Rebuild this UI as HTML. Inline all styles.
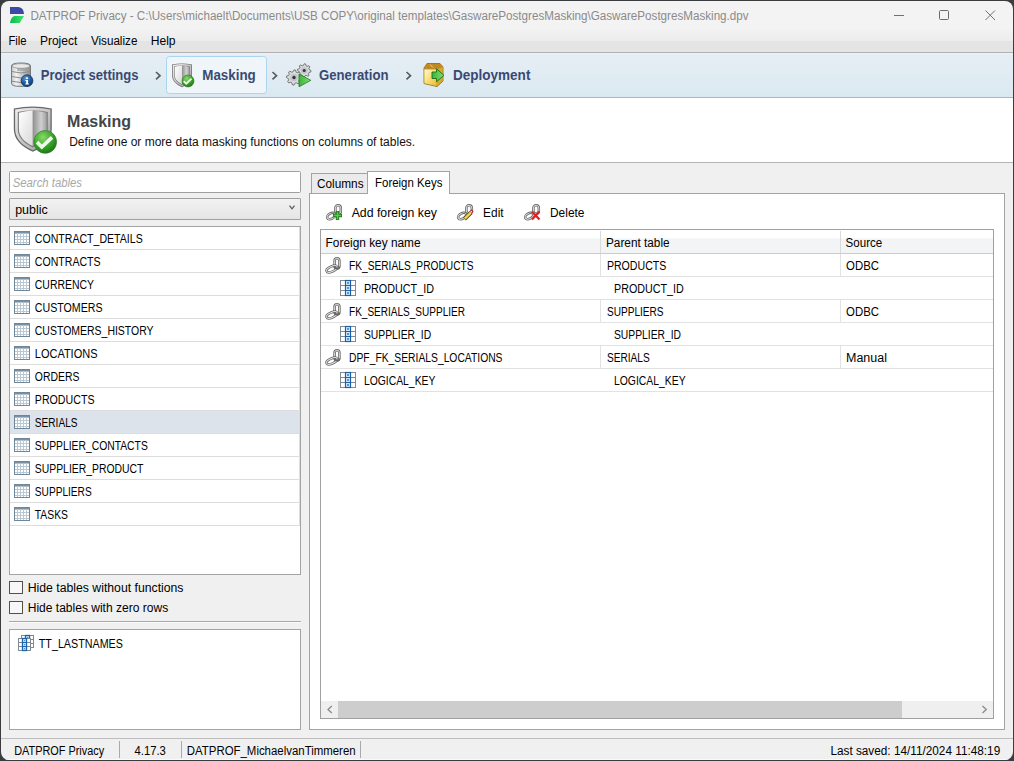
<!DOCTYPE html>
<html><head><meta charset="utf-8"><title>DATPROF Privacy - Masking</title>
<style>html,body{margin:0;padding:0;background:#3a3c40;width:1014px;height:761px;overflow:hidden}svg{display:block}</style></head>
<body><svg width="1014" height="761" viewBox="0 0 1014 761">
<defs>
<clipPath id="win"><rect x="1" y="1" width="1012" height="759" rx="8"/></clipPath>
<linearGradient id="gWiz" x1="0" y1="0" x2="0" y2="1"><stop offset="0" stop-color="#e7eef5"/><stop offset="1" stop-color="#dae9f1"/></linearGradient>
<linearGradient id="gMenu" x1="0" y1="0" x2="0" y2="1"><stop offset="0" stop-color="#f2f2f2"/><stop offset="1" stop-color="#ececec"/></linearGradient>
<linearGradient id="gCombo" x1="0" y1="0" x2="0" y2="1"><stop offset="0" stop-color="#f2f2f2"/><stop offset="1" stop-color="#e5e5e5"/></linearGradient>
<linearGradient id="gTab" x1="0" y1="0" x2="0" y2="1"><stop offset="0" stop-color="#f3f3f3"/><stop offset="1" stop-color="#e6e6e6"/></linearGradient>
<linearGradient id="gHdr" x1="0" y1="0" x2="0" y2="1"><stop offset="0" stop-color="#ffffff"/><stop offset="0.45" stop-color="#f7f7f8"/><stop offset="0.5" stop-color="#eef0f2"/><stop offset="1" stop-color="#f3f4f5"/></linearGradient>
<linearGradient id="gSilver" x1="0" y1="0" x2="1" y2="0"><stop offset="0" stop-color="#c8c8c8"/><stop offset="0.25" stop-color="#f4f4f4"/><stop offset="0.6" stop-color="#c4c4c4"/><stop offset="1" stop-color="#8c8c8c"/></linearGradient>
<linearGradient id="gRim" x1="0" y1="0" x2="1" y2="1"><stop offset="0" stop-color="#f0f0f0"/><stop offset="0.5" stop-color="#c8c8c8"/><stop offset="1" stop-color="#9a9a9a"/></linearGradient>
<linearGradient id="gShieldL" x1="0" y1="0" x2="1" y2="1"><stop offset="0" stop-color="#ffffff"/><stop offset="1" stop-color="#d8d8d8"/></linearGradient>
<linearGradient id="gShieldR" x1="0" y1="0" x2="1" y2="0"><stop offset="0" stop-color="#909090"/><stop offset="0.6" stop-color="#d0d0d0"/><stop offset="1" stop-color="#a0a0a0"/></linearGradient>
<radialGradient id="gGreen" cx="0.4" cy="0.3" r="0.7"><stop offset="0" stop-color="#8ad86a"/><stop offset="0.6" stop-color="#3aa52a"/><stop offset="1" stop-color="#1f7a18"/></radialGradient>
<radialGradient id="gBlue" cx="0.4" cy="0.3" r="0.7"><stop offset="0" stop-color="#5a9ad8"/><stop offset="0.6" stop-color="#1f5c9c"/><stop offset="1" stop-color="#0f3a6e"/></radialGradient>
<linearGradient id="gGold" x1="0" y1="0" x2="1" y2="1"><stop offset="0" stop-color="#fffbe0"/><stop offset="0.45" stop-color="#f8e07a"/><stop offset="1" stop-color="#e8b838"/></linearGradient>
<linearGradient id="gGreenA" x1="0" y1="0" x2="1" y2="0"><stop offset="0" stop-color="#3cb43c"/><stop offset="1" stop-color="#7ee070"/></linearGradient>
<linearGradient id="gLogoG" x1="0" y1="0" x2="1" y2="0"><stop offset="0" stop-color="#10b848"/><stop offset="1" stop-color="#3ae870"/></linearGradient>
<g id="tbl">
  <rect x="0.5" y="0.5" width="15" height="13" fill="#ffffff" stroke="#6f8799"/>
  <rect x="1" y="1" width="14" height="1.6" fill="#7b90a0"/>
  <path d="M1 5.5H15M1 8.5H15M1 11.5H15M3.5 2V13M6.5 2V13M9.5 2V13M12.5 2V13" stroke="#b8c8d4" stroke-width="1" fill="none"/>
</g>
<g id="col">
  <rect x="0.5" y="0.5" width="15" height="15" fill="#ffffff" stroke="#7f8a95"/>
  <path d="M1 5.5H15M1 10.5H15" stroke="#7f8a95"/>
  <rect x="5.5" y="0.5" width="5" height="15" fill="#d8eafc" stroke="#1f5f9f" stroke-width="1.2"/>
  <path d="M5.5 5.5H10.5M5.5 10.5H10.5" stroke="#1f5f9f" stroke-width="1.2"/>
  <rect x="7" y="2" width="2" height="2" fill="#4d97ea"/><rect x="7" y="7" width="2" height="2" fill="#4d97ea"/><rect x="7" y="12" width="2" height="2" fill="#4d97ea"/>
</g>
<g id="chain">
  <rect x="9.6" y="1.2" width="4.8" height="10.2" rx="2.4" fill="none" stroke="#666" stroke-width="2.5"/>
  <rect x="9.6" y="1.2" width="4.8" height="10.2" rx="2.4" fill="none" stroke="#e4e4e4" stroke-width="0.9"/>
  <ellipse cx="6.8" cy="12" rx="5.7" ry="2.5" transform="rotate(-24 6.8 12)" fill="none" stroke="#666" stroke-width="2.5"/>
  <ellipse cx="6.8" cy="12" rx="5.7" ry="2.5" transform="rotate(-24 6.8 12)" fill="none" stroke="#e4e4e4" stroke-width="0.9"/>
  <path d="M9.4 9.5 Q10 11.5 12 11.6 Q14.2 11.5 14.6 9.5" fill="none" stroke="#666" stroke-width="1.6"/>
</g>
<g id="chain2">
  <rect x="9.4" y="1.3" width="5.4" height="8.4" rx="2.7" fill="none" stroke="#666" stroke-width="2.5"/>
  <rect x="9.4" y="1.3" width="5.4" height="8.4" rx="2.7" fill="none" stroke="#e6e6e6" stroke-width="0.9"/>
  <ellipse cx="5.2" cy="12" rx="4.4" ry="2.7" transform="rotate(-28 5.2 12)" fill="none" stroke="#666" stroke-width="2.5"/>
  <ellipse cx="5.2" cy="12" rx="4.4" ry="2.7" transform="rotate(-28 5.2 12)" fill="none" stroke="#e6e6e6" stroke-width="0.9"/>
</g>
<g id="col13">
  <rect x="0.5" y="0.5" width="12" height="12" fill="#ffffff" stroke="#7f8a95"/>
  <path d="M1 4.5H12M1 8.5H12" stroke="#7f8a95"/>
  <rect x="4.5" y="0.5" width="4" height="12" fill="#d8eafc" stroke="#1f64a8" stroke-width="1.3"/>
  <path d="M4.5 4.5H8.5M4.5 8.5H8.5" stroke="#1f64a8" stroke-width="1.2"/>
  <rect x="6" y="2" width="1.2" height="1.2" fill="#4d97ea"/><rect x="6" y="6" width="1.2" height="1.2" fill="#4d97ea"/><rect x="6" y="10" width="1.2" height="1.2" fill="#4d97ea"/>
</g>
</defs>
<rect x="0" y="0" width="1014" height="761" fill="#3a3c40"/>
<g clip-path="url(#win)">
<rect x="0" y="0" width="1014" height="30" fill="#f3f3f3"/>
<rect x="0" y="30" width="1014" height="11" fill="url(#gMenu)"/>
<rect x="0" y="41" width="1014" height="11" fill="#e4e4e4"/>
<rect x="0" y="52" width="1014" height="1" fill="#b2b2b2"/>
<rect x="0" y="53" width="1014" height="44" fill="url(#gWiz)"/>
<rect x="0" y="53" width="1014" height="1" fill="#ebf3f9"/>
<rect x="0" y="97" width="1014" height="1" fill="#b4b4b4"/>
<rect x="0" y="98" width="1014" height="64" fill="#ffffff"/>
<rect x="0" y="162" width="1014" height="1" fill="#b4b4b4"/>
<rect x="0" y="163" width="1014" height="575" fill="#f0f0f0"/>
<rect x="0" y="738" width="1014" height="1" fill="#bdbdbd"/>
<rect x="0" y="739" width="1014" height="22" fill="#f0f0f0"/>
<rect x="0" y="759" width="1014" height="1" fill="#fafafa"/>
</g>
<rect x="894" y="15" width="10" height="1" fill="#707070"/>
<rect x="939.5" y="10.5" width="9" height="9" rx="1" fill="none" stroke="#6a6a6a"/>
<path d="M985.5 10.5L995 20M995 10.5L985.5 20" stroke="#707070" stroke-width="1"/>
<path d="M10 7H18.5Q23.6 7.5 24 14H10Z" fill="#3f48a2"/>
<path d="M14.6 16H24L19.6 23H10Q10.8 17 14.6 16Z" fill="url(#gLogoG)"/>
<rect x="166.5" y="56.5" width="100" height="37" rx="3" fill="#eff5f9" stroke="#a9d6ee"/>
<path d="M156.0 72L160.0 75.7L156.0 79.4" fill="none" stroke="#555c66" stroke-width="1.7"/>
<path d="M272.5 72L276.5 75.7L272.5 79.4" fill="none" stroke="#555c66" stroke-width="1.7"/>
<path d="M406.5 72L410.5 75.7L406.5 79.4" fill="none" stroke="#555c66" stroke-width="1.7"/>
<g>
<path d="M11.5 66 Q11.5 63 21 63 Q30.5 63 30.5 66 V83.5 Q30.5 86.4 21 86.4 Q11.5 86.4 11.5 83.5 Z" fill="url(#gSilver)" stroke="#7a7a7a" stroke-width="1"/>
<ellipse cx="21" cy="66" rx="9" ry="2.4" fill="#e8e8e8" stroke="#8a8a8a" stroke-width="0.8"/>
<path d="M11.8 71.5 Q21 74.5 30.2 71.5M11.8 76.5 Q21 79.5 30.2 76.5M11.8 81.2 Q21 84 30.2 81.2" fill="none" stroke="#8c8c8c" stroke-width="1"/>
<rect x="17" y="68" width="11" height="3" fill="#9a9a9a" opacity="0.6"/>
<circle cx="27" cy="80.7" r="5.9" fill="url(#gBlue)" stroke="#0e3566" stroke-width="0.8"/>
<rect x="26" y="77.4" width="2" height="1.6" fill="#fff"/>
<path d="M25.3 80H28V83.6H29V84.6H25.2V83.6H26.2V81H25.3Z" fill="#fff"/>
</g>
<g transform="translate(172 63.2) scale(1.0)">
<path d="M0 1.2 Q10 -0.8 20 1.2 V12 Q20 19.5 10 24 Q0 19.5 0 12 Z" fill="#6a6a6a"/>
<path d="M0.7 1.7 Q10 -0.1 19.3 1.7 V12 Q19.3 19 10 23.2 Q0.7 19 0.7 12 Z" fill="url(#gRim)"/>
<path d="M2.1 3 Q10 1.5 17.9 3 V12 Q17.9 18 10 21.7 Q2.1 18 2.1 12 Z" fill="#7c7c7c"/>
<path d="M2.7 3.5 Q6.4 2.4 10 2.2 V21 Q2.7 17.6 2.7 12 Z" fill="url(#gShieldL)"/>
<path d="M10 2.2 Q13.6 2.4 17.3 3.5 V12 Q17.3 17.6 10 21 Z" fill="url(#gShieldR)"/>
</g>
<circle cx="188" cy="81" r="6" fill="url(#gGreen)" stroke="#2a7a20" stroke-width="0.6"/>
<path d="M183.68 81.12 L186.20 83.70 L191.60 78.60" fill="none" stroke="#f4fff0" stroke-width="1.92" opacity="0.95"/>

<g transform="translate(13.8 106.2) scale(1.9)">
<path d="M0 1.2 Q10 -0.8 20 1.2 V12 Q20 19.5 10 24 Q0 19.5 0 12 Z" fill="#6a6a6a"/>
<path d="M0.7 1.7 Q10 -0.1 19.3 1.7 V12 Q19.3 19 10 23.2 Q0.7 19 0.7 12 Z" fill="url(#gRim)"/>
<path d="M2.1 3 Q10 1.5 17.9 3 V12 Q17.9 18 10 21.7 Q2.1 18 2.1 12 Z" fill="#7c7c7c"/>
<path d="M2.7 3.5 Q6.4 2.4 10 2.2 V21 Q2.7 17.6 2.7 12 Z" fill="url(#gShieldL)"/>
<path d="M10 2.2 Q13.6 2.4 17.3 3.5 V12 Q17.3 17.6 10 21 Z" fill="url(#gShieldR)"/>
</g>
<circle cx="45.2" cy="141.9" r="11.4" fill="url(#gGreen)" stroke="#2a7a20" stroke-width="0.6"/>
<path d="M36.99 142.13 L41.78 147.03 L52.04 137.34" fill="none" stroke="#f4fff0" stroke-width="3.65" opacity="0.95"/>

<path d="M311.00 70.60L310.87 71.93L308.91 72.55L308.44 73.43L309.01 75.41L307.98 76.25L306.15 75.31L305.19 75.60L304.20 77.40L302.87 77.27L302.25 75.31L301.37 74.84L299.39 75.41L298.55 74.38L299.49 72.55L299.20 71.59L297.40 70.60L297.53 69.27L299.49 68.65L299.96 67.77L299.39 65.79L300.42 64.95L302.25 65.89L303.21 65.60L304.20 63.80L305.53 63.93L306.15 65.89L307.03 66.36L309.01 65.79L309.85 66.82L308.91 68.65L309.20 69.61Z" fill="#dcdcdc" stroke="#6a6a6a" stroke-width="0.9"/><circle cx="304.2" cy="70.6" r="3.40" fill="#bcc4cc"/><circle cx="304.2" cy="70.6" r="1.50" fill="#333"/>
<path d="M301.60 77.50L301.45 78.98L299.27 79.68L298.74 80.67L299.37 82.87L298.22 83.82L296.18 82.77L295.11 83.09L294.00 85.10L292.52 84.95L291.82 82.77L290.83 82.24L288.63 82.87L287.68 81.72L288.73 79.68L288.41 78.61L286.40 77.50L286.55 76.02L288.73 75.32L289.26 74.33L288.63 72.13L289.78 71.18L291.82 72.23L292.89 71.91L294.00 69.90L295.48 70.05L296.18 72.23L297.17 72.76L299.37 72.13L300.32 73.28L299.27 75.32L299.59 76.39Z" fill="#dcdcdc" stroke="#6a6a6a" stroke-width="0.9"/><circle cx="294" cy="77.5" r="3.80" fill="#bcc4cc"/><circle cx="294" cy="77.5" r="1.67" fill="#333"/>
<path d="M299 74 L310.8 80.3 L299 86.8 Z" fill="url(#gGreenA)" stroke="#1e7a1e" stroke-width="0.8"/>
<path d="M424 68 L427 63.5 H440 L443 67 V81 L437 86.6 L424 83.5 Z" fill="#d8a82a" stroke="#8a6408" stroke-width="0.8"/>
<path d="M424.4 68.2 L427.2 64 H439.8 L442.6 67.2 L437 69.6 H424.4 Z" fill="#c08a22"/>
<path d="M430 64.5 L433 67.5" stroke="#f4e0a0" stroke-width="0.8"/>
<path d="M424.4 69.6 H436.6 V86 L424.4 83.2 Z" fill="url(#gGold)"/>
<path d="M436.6 69.6 L442.6 67.2 V80.8 L436.6 86 Z" fill="#d9a82c"/>
<path d="M432 72 H436.5 V68.8 L444 75.3 L436.5 81.8 V78.5 H432 Z" fill="url(#gGreenA)" stroke="#1a701a" stroke-width="0.9"/>
<rect x="9.5" y="171.5" width="291" height="21" rx="1" fill="#ffffff" stroke="#a0a0a0" stroke-width="1"/>
<rect x="9.5" y="198.5" width="291" height="21" rx="0.5" fill="url(#gCombo)" stroke="#a0a0a0" stroke-width="1"/>
<path d="M289.5 205.6L292 208.8L294.5 205.6" fill="none" stroke="#555" stroke-width="1.2"/>
<rect x="9.5" y="226.5" width="291" height="348" rx="0" fill="#ffffff" stroke="#a3a3a3" stroke-width="1"/>
<rect x="10" y="410" width="289" height="23" fill="#dce3ea"/>
<rect x="299" y="227" width="1" height="299" fill="#dedede"/>
<rect x="10" y="249" width="289" height="1" fill="#dddddd"/>
<use href="#tbl" x="14" y="231"/>
<rect x="10" y="272" width="289" height="1" fill="#dddddd"/>
<use href="#tbl" x="14" y="254"/>
<rect x="10" y="295" width="289" height="1" fill="#dddddd"/>
<use href="#tbl" x="14" y="277"/>
<rect x="10" y="318" width="289" height="1" fill="#dddddd"/>
<use href="#tbl" x="14" y="300"/>
<rect x="10" y="341" width="289" height="1" fill="#dddddd"/>
<use href="#tbl" x="14" y="323"/>
<rect x="10" y="364" width="289" height="1" fill="#dddddd"/>
<use href="#tbl" x="14" y="346"/>
<rect x="10" y="387" width="289" height="1" fill="#dddddd"/>
<use href="#tbl" x="14" y="369"/>
<rect x="10" y="410" width="289" height="1" fill="#dddddd"/>
<use href="#tbl" x="14" y="392"/>
<rect x="10" y="433" width="289" height="1" fill="#dddddd"/>
<use href="#tbl" x="14" y="415"/>
<rect x="10" y="456" width="289" height="1" fill="#dddddd"/>
<use href="#tbl" x="14" y="438"/>
<rect x="10" y="479" width="289" height="1" fill="#dddddd"/>
<use href="#tbl" x="14" y="461"/>
<rect x="10" y="502" width="289" height="1" fill="#dddddd"/>
<use href="#tbl" x="14" y="484"/>
<rect x="10" y="525" width="289" height="1" fill="#dddddd"/>
<use href="#tbl" x="14" y="507"/>
<rect x="9.5" y="581.5" width="13" height="12" rx="0" fill="#f7f7f7" stroke="#505050" stroke-width="1"/>
<rect x="9.5" y="601.5" width="13" height="12" rx="0" fill="#f7f7f7" stroke="#505050" stroke-width="1"/>
<rect x="9" y="621" width="292" height="1" fill="#a8a8a8"/>
<rect x="9" y="622" width="292" height="1" fill="#fcfcfc"/>
<rect x="9.5" y="629.5" width="291" height="100" rx="0" fill="#ffffff" stroke="#a3a3a3" stroke-width="1"/>
<use href="#col13" x="21" y="635"/>
<use href="#col13" x="18" y="638"/>
<rect x="309.5" y="193.5" width="695" height="536" rx="0" fill="#ffffff" stroke="#a3a3a3" stroke-width="1"/>
<rect x="311.5" y="173.5" width="56" height="20" rx="0" fill="#ebebeb" stroke="#a3a3a3" stroke-width="1"/>
<rect x="367.5" y="171.5" width="82" height="22" rx="0" fill="#ffffff" stroke="#a3a3a3" stroke-width="1"/>
<rect x="368" y="193" width="81" height="1" fill="#ffffff"/>
<use href="#chain2" x="326" y="204"/>
<path d="M337.5 211V220M333 215.5H342" stroke="#1e7a1e" stroke-width="3.4"/><path d="M337.5 211.8V219.2M333.8 215.5H341.2" stroke="#54d040" stroke-width="1.5"/>
<use href="#chain2" x="457" y="204"/>
<path d="M464.5 219 L471 212.5" stroke="#5a4a10" stroke-width="4"/><path d="M464.8 218.7 L470.8 212.7" stroke="#f2d44a" stroke-width="2.4"/><path d="M470.6 212.4 L472.6 210.4" stroke="#c02020" stroke-width="3"/><path d="M470.5 212.5 L471.8 211.2" stroke="#f4f4f4" stroke-width="1.2"/>
<use href="#chain2" x="524" y="204"/>
<path d="M532 211.5 L539.5 219.5M539.5 211.5 L532 219.5" stroke="#e02020" stroke-width="2.2"/>
<rect x="320.5" y="229.5" width="673" height="489" rx="0" fill="#ffffff" stroke="#a0a0a0" stroke-width="1"/>
<rect x="321" y="239" width="672" height="14" fill="#f3f4f5"/>
<rect x="321" y="238" width="672" height="1" fill="#f8f9fa"/>
<rect x="321" y="253" width="672" height="1" fill="#cbcbcb"/>
<rect x="600" y="231" width="1" height="22" fill="#dadada"/>
<rect x="840" y="231" width="1" height="22" fill="#dadada"/>
<rect x="321" y="276" width="672" height="1" fill="#e2e2e2"/>
<rect x="600" y="254" width="1" height="22" fill="#e2e2e2"/>
<rect x="840" y="254" width="1" height="22" fill="#e2e2e2"/>
<use href="#chain" x="325" y="257"/>
<rect x="321" y="299" width="672" height="1" fill="#e2e2e2"/>
<use href="#col" x="340" y="280"/>
<rect x="321" y="322" width="672" height="1" fill="#e2e2e2"/>
<rect x="600" y="300" width="1" height="22" fill="#e2e2e2"/>
<rect x="840" y="300" width="1" height="22" fill="#e2e2e2"/>
<use href="#chain" x="325" y="303"/>
<rect x="321" y="345" width="672" height="1" fill="#e2e2e2"/>
<use href="#col" x="340" y="326"/>
<rect x="321" y="368" width="672" height="1" fill="#e2e2e2"/>
<rect x="600" y="346" width="1" height="22" fill="#e2e2e2"/>
<rect x="840" y="346" width="1" height="22" fill="#e2e2e2"/>
<use href="#chain" x="325" y="349"/>
<rect x="321" y="391" width="672" height="1" fill="#e2e2e2"/>
<use href="#col" x="340" y="372"/>
<rect x="321" y="701" width="672" height="17" fill="#efefef"/>
<rect x="338" y="701" width="564" height="17" fill="#cdcdcd"/>
<path d="M331.8 706L328 709.5L331.8 713" fill="none" stroke="#8a8a8a" stroke-width="1.3"/>
<path d="M982.5 706L986.3 709.5L982.5 713" fill="none" stroke="#8a8a8a" stroke-width="1.3"/>
<rect x="119" y="741" width="1" height="17" fill="#a9a9a9"/>
<rect x="181" y="741" width="1" height="17" fill="#a9a9a9"/>
<rect x="360" y="741" width="1" height="17" fill="#a9a9a9"/>
<g font-family='"Liberation Sans", sans-serif'>
<text x="30.40" y="19.50" font-size="12" fill="#8a8a8a" textLength="718.20" lengthAdjust="spacingAndGlyphs">DATPROF Privacy - C:\Users\michaelt\Documents\USB COPY\original templates\GaswarePostgresMasking\GaswarePostgresMasking.dpv</text>
<text x="8.40" y="45.00" font-size="12.5" fill="#000" textLength="18.20" lengthAdjust="spacingAndGlyphs">File</text>
<text x="39.90" y="45.00" font-size="12.5" fill="#000" textLength="37.40" lengthAdjust="spacingAndGlyphs">Project</text>
<text x="90.90" y="45.00" font-size="12.5" fill="#000" textLength="46.50" lengthAdjust="spacingAndGlyphs">Visualize</text>
<text x="150.70" y="45.00" font-size="12.5" fill="#000" textLength="24.90" lengthAdjust="spacingAndGlyphs">Help</text>
<text x="40.80" y="80.00" font-size="14.5" font-weight="bold" fill="#3a4972" textLength="97.70" lengthAdjust="spacingAndGlyphs">Project settings</text>
<text x="202.30" y="80.00" font-size="14.5" font-weight="bold" fill="#3a4972" textLength="53.40" lengthAdjust="spacingAndGlyphs">Masking</text>
<text x="319.00" y="80.00" font-size="14.5" font-weight="bold" fill="#3a4972" textLength="69.50" lengthAdjust="spacingAndGlyphs">Generation</text>
<text x="453.00" y="80.00" font-size="14.5" font-weight="bold" fill="#3a4972" textLength="77.40" lengthAdjust="spacingAndGlyphs">Deployment</text>
<text x="67.10" y="127.00" font-size="15.8" font-weight="bold" fill="#454545" textLength="64.00" lengthAdjust="spacingAndGlyphs">Masking</text>
<text x="69.20" y="146.00" font-size="12.5" fill="#111" textLength="346.00" lengthAdjust="spacingAndGlyphs">Define one or more data masking functions on columns of tables.</text>
<text x="12.70" y="186.60" font-size="12.5" font-style="italic" fill="#a8a8a8" textLength="69.30" lengthAdjust="spacingAndGlyphs">Search tables</text>
<text x="15.20" y="213.60" font-size="12.5" fill="#000" textLength="32.50" lengthAdjust="spacingAndGlyphs">public</text>
<text x="34.80" y="243.00" font-size="12.5" fill="#000" textLength="107.90" lengthAdjust="spacingAndGlyphs">CONTRACT_DETAILS</text>
<text x="34.80" y="266.00" font-size="12.5" fill="#000" textLength="65.80" lengthAdjust="spacingAndGlyphs">CONTRACTS</text>
<text x="34.80" y="289.00" font-size="12.5" fill="#000" textLength="59.30" lengthAdjust="spacingAndGlyphs">CURRENCY</text>
<text x="34.80" y="312.00" font-size="12.5" fill="#000" textLength="67.80" lengthAdjust="spacingAndGlyphs">CUSTOMERS</text>
<text x="34.80" y="335.00" font-size="12.5" fill="#000" textLength="118.80" lengthAdjust="spacingAndGlyphs">CUSTOMERS_HISTORY</text>
<text x="34.80" y="358.00" font-size="12.5" fill="#000" textLength="62.70" lengthAdjust="spacingAndGlyphs">LOCATIONS</text>
<text x="34.80" y="381.00" font-size="12.5" fill="#000" textLength="44.60" lengthAdjust="spacingAndGlyphs">ORDERS</text>
<text x="34.80" y="404.00" font-size="12.5" fill="#000" textLength="59.70" lengthAdjust="spacingAndGlyphs">PRODUCTS</text>
<text x="34.80" y="427.00" font-size="12.5" fill="#000" textLength="42.70" lengthAdjust="spacingAndGlyphs">SERIALS</text>
<text x="34.80" y="450.00" font-size="12.5" fill="#000" textLength="113.00" lengthAdjust="spacingAndGlyphs">SUPPLIER_CONTACTS</text>
<text x="34.80" y="473.00" font-size="12.5" fill="#000" textLength="108.60" lengthAdjust="spacingAndGlyphs">SUPPLIER_PRODUCT</text>
<text x="34.80" y="496.00" font-size="12.5" fill="#000" textLength="56.90" lengthAdjust="spacingAndGlyphs">SUPPLIERS</text>
<text x="34.80" y="519.00" font-size="12.5" fill="#000" textLength="33.20" lengthAdjust="spacingAndGlyphs">TASKS</text>
<text x="27.70" y="591.50" font-size="12.5" fill="#000" textLength="155.80" lengthAdjust="spacingAndGlyphs">Hide tables without functions</text>
<text x="27.70" y="611.50" font-size="12.5" fill="#000" textLength="140.50" lengthAdjust="spacingAndGlyphs">Hide tables with zero rows</text>
<text x="38.80" y="648.00" font-size="12.5" fill="#000" textLength="84.10" lengthAdjust="spacingAndGlyphs">TT_LASTNAMES</text>
<text x="317.00" y="188.00" font-size="12.5" fill="#000" textLength="46.60" lengthAdjust="spacingAndGlyphs">Columns</text>
<text x="375.10" y="187.20" font-size="12.5" fill="#000" textLength="67.30" lengthAdjust="spacingAndGlyphs">Foreign Keys</text>
<text x="351.70" y="217.00" font-size="12.5" fill="#000" textLength="85.20" lengthAdjust="spacingAndGlyphs">Add foreign key</text>
<text x="483.10" y="217.00" font-size="12.5" fill="#000" textLength="20.50" lengthAdjust="spacingAndGlyphs">Edit</text>
<text x="550.00" y="217.00" font-size="12.5" fill="#000" textLength="34.50" lengthAdjust="spacingAndGlyphs">Delete</text>
<text x="325.60" y="247.00" font-size="12.5" fill="#000" textLength="95.00" lengthAdjust="spacingAndGlyphs">Foreign key name</text>
<text x="606.00" y="247.00" font-size="12.5" fill="#000" textLength="63.60" lengthAdjust="spacingAndGlyphs">Parent table</text>
<text x="845.60" y="247.00" font-size="12.5" fill="#000" textLength="36.60" lengthAdjust="spacingAndGlyphs">Source</text>
<text x="349.00" y="270.00" font-size="12.5" fill="#000" textLength="124.50" lengthAdjust="spacingAndGlyphs">FK_SERIALS_PRODUCTS</text>
<text x="606.90" y="270.00" font-size="12.5" fill="#000" textLength="59.50" lengthAdjust="spacingAndGlyphs">PRODUCTS</text>
<text x="846.00" y="270.00" font-size="12.5" fill="#000" textLength="33.00" lengthAdjust="spacingAndGlyphs">ODBC</text>
<text x="363.90" y="293.00" font-size="12.5" fill="#000" textLength="70.10" lengthAdjust="spacingAndGlyphs">PRODUCT_ID</text>
<text x="614.00" y="293.00" font-size="12.5" fill="#000" textLength="69.80" lengthAdjust="spacingAndGlyphs">PRODUCT_ID</text>
<text x="349.00" y="316.00" font-size="12.5" fill="#000" textLength="116.00" lengthAdjust="spacingAndGlyphs">FK_SERIALS_SUPPLIER</text>
<text x="606.90" y="316.00" font-size="12.5" fill="#000" textLength="56.70" lengthAdjust="spacingAndGlyphs">SUPPLIERS</text>
<text x="846.00" y="316.00" font-size="12.5" fill="#000" textLength="33.00" lengthAdjust="spacingAndGlyphs">ODBC</text>
<text x="363.90" y="339.00" font-size="12.5" fill="#000" textLength="67.20" lengthAdjust="spacingAndGlyphs">SUPPLIER_ID</text>
<text x="614.00" y="339.00" font-size="12.5" fill="#000" textLength="67.00" lengthAdjust="spacingAndGlyphs">SUPPLIER_ID</text>
<text x="349.00" y="362.00" font-size="12.5" fill="#000" textLength="153.50" lengthAdjust="spacingAndGlyphs">DPF_FK_SERIALS_LOCATIONS</text>
<text x="606.90" y="362.00" font-size="12.5" fill="#000" textLength="42.90" lengthAdjust="spacingAndGlyphs">SERIALS</text>
<text x="846.00" y="362.00" font-size="12.5" fill="#000" textLength="40.90" lengthAdjust="spacingAndGlyphs">Manual</text>
<text x="363.90" y="385.00" font-size="12.5" fill="#000" textLength="71.50" lengthAdjust="spacingAndGlyphs">LOGICAL_KEY</text>
<text x="614.00" y="385.00" font-size="12.5" fill="#000" textLength="71.60" lengthAdjust="spacingAndGlyphs">LOGICAL_KEY</text>
<text x="14.20" y="754.60" font-size="12.5" fill="#000" textLength="89.90" lengthAdjust="spacingAndGlyphs">DATPROF Privacy</text>
<text x="134.50" y="754.60" font-size="12.5" fill="#000" textLength="31.40" lengthAdjust="spacingAndGlyphs">4.17.3</text>
<text x="186.80" y="754.60" font-size="12.5" fill="#000" textLength="168.80" lengthAdjust="spacingAndGlyphs">DATPROF_MichaelvanTimmeren</text>
<text x="830.40" y="754.60" font-size="12.5" fill="#000" textLength="169.80" lengthAdjust="spacingAndGlyphs">Last saved: 14/11/2024 11:48:19</text>
</g>
</svg></body></html>
